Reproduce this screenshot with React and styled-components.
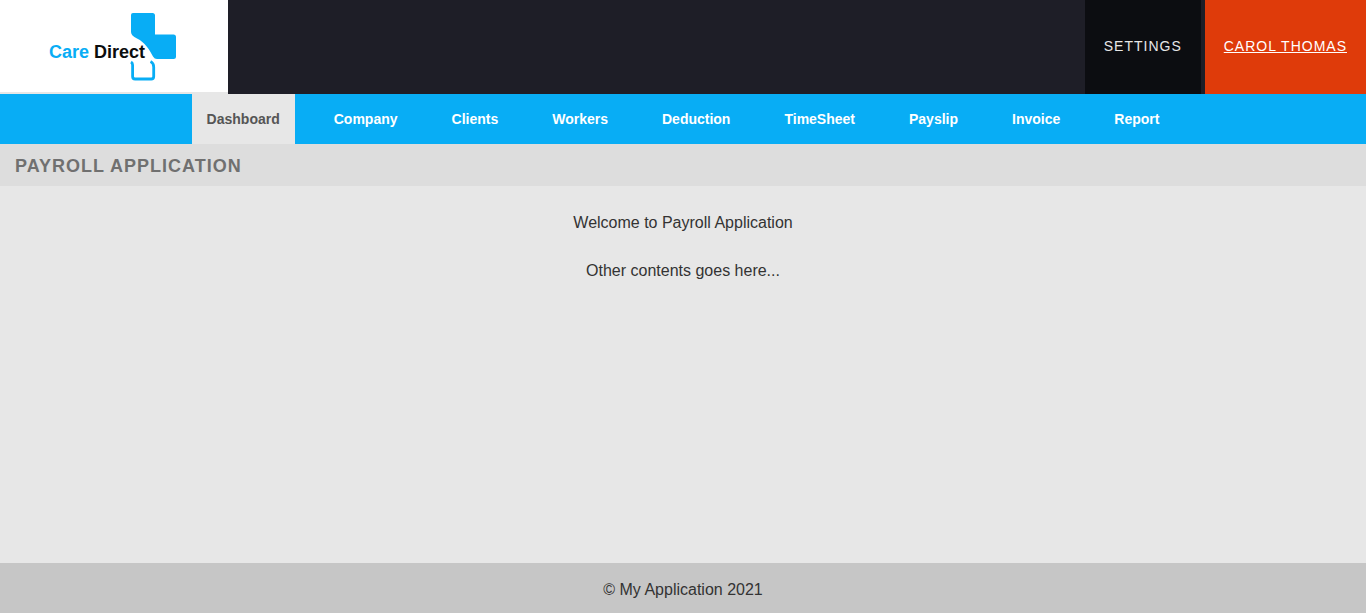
import React from 'react';
import styled, { createGlobalStyle } from 'styled-components';

const GlobalStyle = createGlobalStyle`
  * { box-sizing: border-box; }
  body {
    margin: 0;
    background: #e7e7e7;
    color: #333;
    font-family: "Liberation Sans", Arial, sans-serif;
    font-size: 16px;
    line-height: 24px;
  }
`;

const Page = styled.div`
  display: flex;
  flex-direction: column;
  min-height: 100vh;
`;

const Header = styled.header`
  display: flex;
  height: 94px;
  background: #1e1e27;
`;

const LogoLink = styled.a`
  display: flex;
  width: 228px;
  background: #fff;
  border-bottom: 2px solid #e7e7e7;
`;

const UserActions = styled.div`
  display: flex;
  gap: 4px;
  margin-left: auto;
`;

const HeaderAction = styled.a`
  display: flex;
  align-items: center;
  padding: 0 19px 2px;
  background: ${(p) => (p.$accent ? '#df3b0a' : '#0c0d11')};
  color: ${(p) => (p.$accent ? '#fff' : '#e7e7e7')};
  font-size: 14px;
  letter-spacing: 1px;
  text-transform: uppercase;
  text-decoration: ${(p) => (p.$accent ? 'underline' : 'none')};
`;

const Nav = styled.nav`
  background: #08adf5;
`;

const NavList = styled.ul`
  display: flex;
  justify-content: center;
  gap: 24px;
  margin: 0;
  padding: 0;
  list-style: none;
`;

const NavLink = styled.a`
  display: block;
  padding: 0 15px;
  background: ${(p) => (p.$active ? '#e7e7e7' : 'transparent')};
  color: ${(p) => (p.$active ? '#555' : '#fff')};
  font-size: 14px;
  font-weight: bold;
  line-height: 50px;
  text-decoration: none;
`;

const PageTitle = styled.h1`
  margin: 0;
  padding: 10px 15px 8px;
  background: #ddd;
  color: #707070;
  font-size: 18px;
  letter-spacing: 1px;
  line-height: 24px;
  text-transform: uppercase;
`;

const Content = styled.main`
  display: flex;
  flex: 1;
  flex-direction: column;
  gap: 24px;
  padding: 25px 15px;
  text-align: center;
`;

const Paragraph = styled.p`
  margin: 0;
`;

const Footer = styled.footer`
  padding: 15px 15px 11px;
  background: #c6c6c6;
  text-align: center;
`;

const LogoWord = styled.text`
  font-size: 18px;
  font-weight: bold;
`;

function Logo() {
  return (
    <svg width="228" height="92" viewBox="0 0 228 92" role="img" aria-label="Care Direct">
      <path
        fill="#08adf5"
        d="M133 13H152.500Q155 13 155 15.500V34.500H173.500Q176 34.500 176 37V56.500Q176 59 173.500 59H157Q154.500 59 153 56.500C149 49 145 42.500 137 38.500Q131 35.500 131 32V15Q131 13 133 13Z"
      />
      <path
        fill="none"
        stroke="#08adf5"
        strokeWidth="2.800"
        d="M131 62Q132.600 63 132.600 65V76.500Q132.600 79 135.100 79H151.200Q153.700 79 153.700 76.500V67Q153.700 63 150.500 61.500"
      />
      <LogoWord x="49" y="58" fill="#08adf5">
        Care <tspan fill="#0b0d0e">Direct</tspan>
      </LogoWord>
    </svg>
  );
}

const links = [
  'Dashboard', 'Company', 'Clients', 'Workers', 'Deduction',
  'TimeSheet', 'Payslip', 'Invoice', 'Report',
];

export default function App() {
  return (
    <Page>
      <GlobalStyle />
      <Header>
        <LogoLink href="#home"><Logo /></LogoLink>
        <UserActions>
          <HeaderAction href="#settings">Settings</HeaderAction>
          <HeaderAction href="#profile" $accent>Carol Thomas</HeaderAction>
        </UserActions>
      </Header>
      <Nav aria-label="Main">
        <NavList>
          {links.map((label, i) => (
            <li key={label}>
              <NavLink
                href={`#${label.toLowerCase()}`}
                $active={i === 0}
                aria-current={i === 0 ? 'page' : undefined}
              >
                {label}
              </NavLink>
            </li>
          ))}
        </NavList>
      </Nav>
      <PageTitle>Payroll Application</PageTitle>
      <Content>
        <Paragraph>Welcome to Payroll Application</Paragraph>
        <Paragraph>Other contents goes here...</Paragraph>
      </Content>
      <Footer>© My Application 2021</Footer>
    </Page>
  );
}
